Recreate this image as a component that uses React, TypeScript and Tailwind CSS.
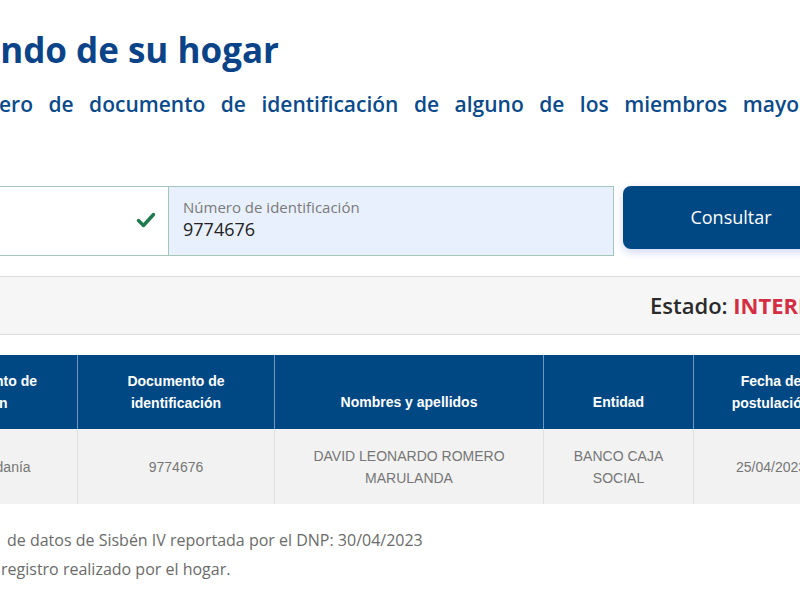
import React from "react";

const os = { fontFamily: '"Open Sans", "Noto Sans", sans-serif' };
const ar = { fontFamily: '"Liberation Sans", Arial, sans-serif' };

export default function App() {
  return (
    <div className="w-[800px] h-[600px] overflow-hidden bg-white relative" style={os}>
      <div className="flex flex-col w-[1100px]">
        {/* Title */}
        <h1 className="pt-[26px] h-[80px] text-[35px] leading-[47px] font-bold text-[#0a4387] whitespace-nowrap -ml-[21px]">
          ando de su hogar
        </h1>
        {/* Subtitle */}
        <p className="mt-[10px] h-[40px] text-[21px] leading-[28px] font-semibold text-[#0b4a8a] whitespace-nowrap [word-spacing:10px] -ml-[1px]">
          ero de documento de identificación de alguno de los miembros mayores de edad
        </p>
        {/* Inputs row */}
        <div className="mt-[56px] flex items-start -ml-[200px]">
          <div className="w-[368px] h-[70px] border border-[#a3c7b9] border-r-0 bg-white flex items-center justify-end pr-[12px]">
            <svg width="20" height="18" viewBox="0 0 20 18" className="mt-[-2px]">
              <path d="M2.5 9.5 L7.5 14.5 L17.5 3.5" fill="none" stroke="#1f7a4d" strokeWidth="3.4" strokeLinecap="round" strokeLinejoin="round" />
            </svg>
          </div>
          <div className="w-[446px] h-[70px] border border-[#a3c7b9] bg-[#e8f0fe] flex flex-col justify-center pl-[14px]">
            <span className="text-[15px] leading-[20px] text-[#7a7a7a] -mt-[4px]">Número de identificación</span>
            <span className="text-[18px] leading-[24px] text-[#222]">9774676</span>
          </div>
          <div className="ml-[9px] w-[216px] h-[63px] rounded-[8px] bg-[#004884] flex items-center justify-center text-white text-[18px] shadow-[0_3px_8px_rgba(60,90,220,0.25)]">
            Consultar
          </div>
        </div>
        {/* Status bar */}
        <div className="mt-[20px] h-[59px] border-y border-[#dcdcdc] bg-[#f6f6f6] flex items-center">
          <div className="ml-[650px] text-[22px] font-semibold text-[#2a2a2a] whitespace-nowrap">
            Estado: <span className="font-bold text-[#d42e44]">INTERESADO</span>
          </div>
        </div>
        {/* Table */}
        <div className="mt-[20px] -ml-[152px] flex flex-col" style={ar}>
          <div className="flex h-[74px] bg-[#004884] text-white text-[14px] font-bold leading-[22px] text-center">
            <div className="w-[230px] flex items-center justify-center border-r border-[#6f95c0]">Tipo de documento de<br />identificación</div>
            <div className="w-[197px] flex items-center justify-center border-r border-[#6f95c0]">Documento de<br />identificación</div>
            <div className="w-[269px] flex items-end justify-center pb-[16px] border-r border-[#6f95c0]">Nombres y apellidos</div>
            <div className="w-[150px] flex items-end justify-center pb-[16px] border-r border-[#6f95c0]">Entidad</div>
            <div className="w-[154px] flex items-center justify-center">Fecha de<br />postulación</div>
          </div>
          <div className="flex h-[75px] bg-[#f2f2f2] text-[#767676] text-[14px] leading-[22px] text-center">
            <div className="w-[230px] flex items-center justify-center border-r border-[#e0e0e0]">Cédula de ciudadanía</div>
            <div className="w-[197px] flex items-center justify-center border-r border-[#e0e0e0]">9774676</div>
            <div className="w-[269px] flex items-center justify-center border-r border-[#e0e0e0]">DAVID LEONARDO ROMERO<br />MARULANDA</div>
            <div className="w-[150px] flex items-center justify-center border-r border-[#e0e0e0]">BANCO CAJA<br />SOCIAL</div>
            <div className="w-[154px] flex items-center justify-center">25/04/2023</div>
          </div>
        </div>
        {/* Footer */}
        <div className="mt-[22px] text-[16px] leading-[29px] text-[#6b6b6b] whitespace-nowrap">
          <p className="ml-[7px]">de datos de Sisbén IV reportada por el DNP: 30/04/2023</p>
          <p className="ml-[1px]">registro realizado por el hogar.</p>
        </div>
      </div>
    </div>
  );
}
